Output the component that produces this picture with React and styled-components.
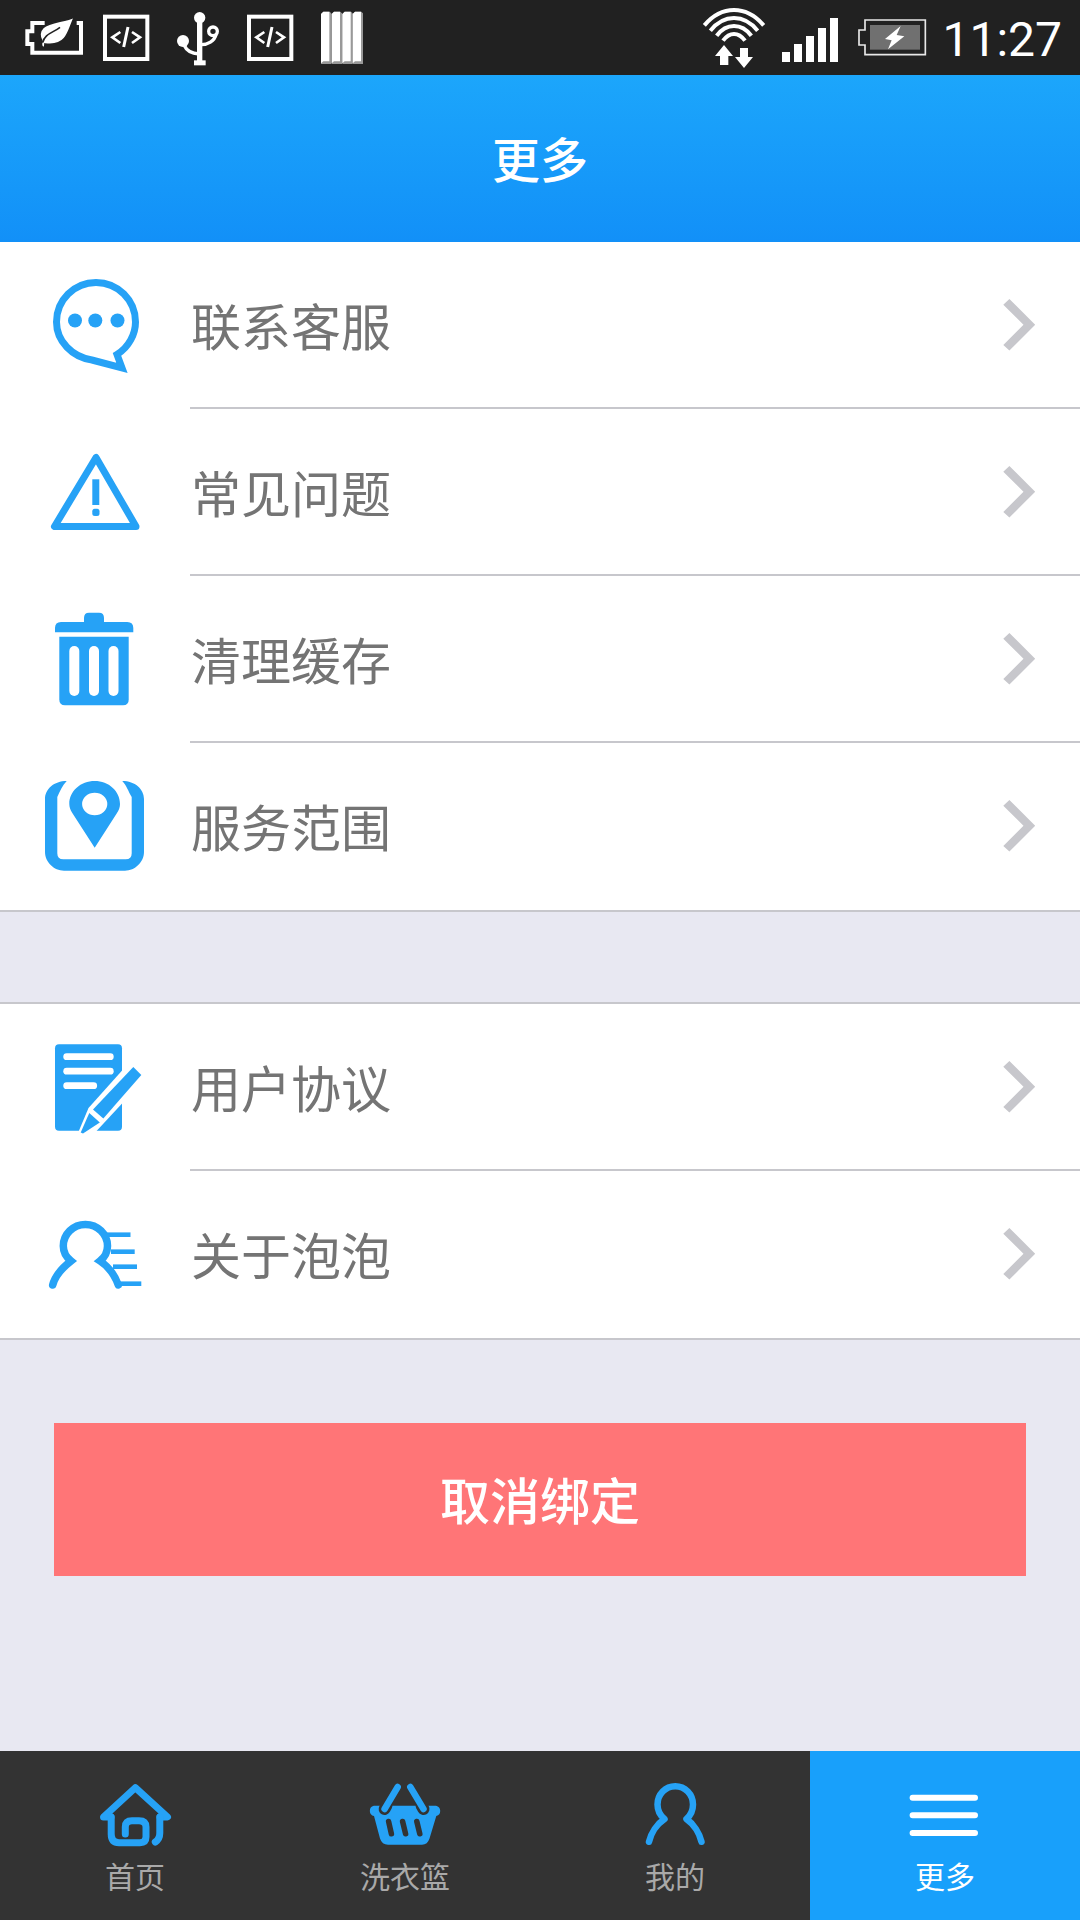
import React, { useState } from 'react';
import styled, { createGlobalStyle, ThemeProvider } from 'styled-components';

const theme = {
  blue: '#26a2f6',
  activeBlue: '#18a0fb',
  red: '#ff7577',
  white: '#ffffff',
  dark: '#333333',
  statusBar: '#212121',
  background: '#e8e8f2',
  line: '#c7c7cc',
  text: '#747474',
  tabText: '#a9a9a9',
  font: {
    family: "'Noto Sans CJK SC', sans-serif",
    size: {
      s: '30px',
      m: '48px',
      l: '50px',
    },
  },
};

const GlobalStyle = createGlobalStyle`
  *, *::before, *::after {
    box-sizing: border-box;
  }

  body {
    margin: 0;
    font-family: ${theme.font.family};
    background-color: ${theme.background};
  }

  svg {
    display: block;
    flex-shrink: 0;
    overflow: visible;
  }
`;

const Wrapper = styled.div`
  display: flex;
  flex-direction: column;
  min-height: 100vh;
`;

const StatusBar = styled.div`
  display: flex;
  justify-content: space-between;
  height: 75px;
  padding: 0 18px 0 24px;
  background-color: ${({ theme }) => theme.statusBar};
  color: ${({ theme }) => theme.white};
`;

const StatusGroup = styled.div`
  display: flex;
  align-items: center;
  gap: 18px;
`;

const Time = styled.time`
  font-family: Roboto, sans-serif;
  font-size: ${({ theme }) => theme.font.size.m};
  line-height: 72px;
  padding-top: 4px;
`;

const Header = styled.header`
  display: flex;
  justify-content: center;
  align-items: center;
  height: 167px;
  padding-bottom: 4px;
  background: linear-gradient(#1ca6fb, #1290f8);
  color: ${({ theme }) => theme.white};
`;

const Title = styled.h1`
  margin: 0;
  font-size: ${({ theme }) => theme.font.size.m};
  font-weight: 500;
  line-height: 72px;
`;

const List = styled.nav`
  display: flex;
  flex-direction: column;
  background-color: ${({ theme }) => theme.white};
  border-bottom: 2px solid ${({ theme }) => theme.line};

  & + & {
    margin-top: 90px;
    border-top: 2px solid ${({ theme }) => theme.line};
  }
`;

const RowIcon = styled.span`
  display: flex;
  justify-content: center;
  width: 190px;
  padding-top: 32px;
  color: ${({ theme }) => theme.blue};
`;

const RowBody = styled.span`
  display: flex;
  flex: 1;
  justify-content: space-between;
  align-items: center;
  padding-right: 44px;
  border-bottom: 2px solid ${({ theme }) => theme.line};
  color: ${({ theme }) => theme.line};
`;

const RowLink = styled.a`
  display: flex;
  height: 167px;
  text-decoration: none;

  &:last-child ${RowBody} {
    border-color: transparent;
  }
`;

const RowLabel = styled.span`
  padding: 0 0 2px 1px;
  color: ${({ theme }) => theme.text};
  font-size: ${({ theme }) => theme.font.size.l};
  line-height: 72px;
`;

const UnbindButton = styled.button`
  height: 153px;
  margin: 83px 54px 60px;
  padding: 0 0 4px;
  border: 0;
  background-color: ${({ theme }) => theme.red};
  color: ${({ theme }) => theme.white};
  font-family: inherit;
  font-size: ${({ theme }) => theme.font.size.l};
  font-weight: 500;
`;

const TabBar = styled.nav`
  display: grid;
  grid-template-columns: repeat(4, 1fr);
  margin-top: auto;
  background-color: ${({ theme }) => theme.dark};
`;

const Tab = styled.a`
  display: flex;
  flex-direction: column;
  align-items: center;
  gap: 4px;
  height: 169px;
  padding-top: 32px;
  background-color: ${({ theme, $active }) => ($active ? theme.activeBlue : theme.dark)};
  color: ${({ theme, $active }) => ($active ? theme.white : theme.blue)};
  text-decoration: none;
`;

const TabLabel = styled.span`
  color: ${({ theme, $active }) => ($active ? theme.white : theme.tabText)};
  font-size: ${({ theme }) => theme.font.size.s};
  line-height: 44px;
`;

const RowSvg = ({ children }) => (
  <svg width="100" height="101" viewBox="0 0 100 101" fill="currentColor" aria-hidden="true">
    {children}
  </svg>
);

const TabSvg = ({ children }) => (
  <svg width="72" height="66" viewBox="0 0 72 66" fill="none" stroke="currentColor" strokeWidth="7" strokeLinecap="round" strokeLinejoin="round" aria-hidden="true">
    {children}
  </svg>
);

const ChatIcon = () => (
  <RowSvg>
    <path
      d="M77 94 L72 80.5 C84 73 90.5 60 90.5 48 A39.5 39.5 0 1 0 11.5 48 C11.5 67 27 83 47 86 Z"
      fill="none"
      stroke="currentColor"
      strokeWidth="7"
    />
    <circle cx="30" cy="46.5" r="7" />
    <circle cx="50.3" cy="46.5" r="7" />
    <circle cx="72.5" cy="46.5" r="7" />
  </RowSvg>
);

const WarningIcon = () => (
  <RowSvg>
    <path d="M51 16.5 L9.5 85.5 H91 Z" fill="none" stroke="currentColor" strokeWidth="7" strokeLinejoin="round" />
    <path d="M47.3 38.3 H54.3 V64 H47.3 Z" />
    <rect x="47.3" y="67.7" width="7.2" height="7.2" rx="2.5" />
  </RowSvg>
);

const TrashIcon = () => (
  <RowSvg>
    <path d="M10 24.3 V20 Q10 14 16 14 H39 V10 Q39 4.7 44 4.7 H54 Q59 4.7 59 10 V14 H82.3 Q88.3 14 88.3 20 V24.3 Z" />
    <path d="M14.3 28.7 H83.7 V91.5 Q83.7 97.3 78 97.3 H20 Q14.3 97.3 14.3 91.5 Z" />
    <g stroke="#fff" strokeWidth="10" strokeLinecap="round">
      <path d="M29.3 43 V83" />
      <path d="M49 43 V83" />
      <path d="M68.5 43 V83" />
    </g>
  </RowSvg>
);

const PlaceIcon = () => (
  <RowSvg>
    <path d="M21.7 6 C9 6 0 14 0 24 V77 C0 87 9 95.7 19 95.7 H80 C90 95.7 99 87 99 77 V24 C99 14 90 6 77.3 6 C82 11 83 16 86.7 22 V78.3 Q86.7 84.3 80.7 84.3 H18.3 Q12.3 84.3 12.3 78.3 V22 C15 16 17 11 21.7 6 Z" />
    <path
      d="M49.7 72.7 L27.3 38 C25.3 35 24.3 32 24.3 29 C24.3 16 35.7 6 49.7 6 S75 16 75 29 C75 32 74 35 72 38 Z M49.7 17.7 A12.6 11.3 0 1 0 49.7 40.3 A12.6 11.3 0 1 0 49.7 17.7 Z"
      fillRule="evenodd"
    />
  </RowSvg>
);

const AgreementIcon = () => (
  <RowSvg>
    <rect x="10" y="8.3" width="67" height="86.4" rx="4" />
    <g stroke="#fff" strokeWidth="6.8" strokeLinecap="round">
      <path d="M21.7 20.7 H65.3" />
      <path d="M21.7 35.2 H65.3" />
      <path d="M21.7 49.7 H48.7" />
    </g>
    <path d="M78 33.5 L43.5 72 L33 97 L36 100 H45 L52 94.5 L78 66.5 Z" fill="#fff" />
    <path d="M88.3 31 L96.3 39 L58.3 82.5 L48 73.5 Z" />
    <path d="M44.3 77 L54.8 86.5 L38 97.5 L35.7 96.5 Z" />
  </RowSvg>
);

const AboutIcon = () => (
  <RowSvg>
    <g fill="none" stroke="currentColor">
      <path
        d="M7.7 82 C10 73 17 65 26 58 C21 54 18.3 48 18.3 43 A22 21.5 0 0 1 62.5 43 C62.5 49 60 54 55 58 C64 64 70.5 74 73.3 82"
        strokeWidth="7.5"
        strokeLinecap="round"
      />
      <g strokeWidth="4.6">
        <path d="M60 31.7 H85.5" />
        <path d="M66 48.7 H89.7" />
        <path d="M68 63.7 H92" />
        <path d="M73 80.7 H96.3" />
      </g>
    </g>
  </RowSvg>
);

const Chevron = () => (
  <svg width="34" height="51" viewBox="0 0 34 51" fill="currentColor" aria-hidden="true">
    <path d="M7.4 0 L33.2 25.8 L7.4 51.5 L1.3 46 L21.5 25.8 L1.3 5.7 Z" />
  </svg>
);

const HomeIcon = () => (
  <TabSvg>
    <path d="M12 34 H4.5 L36.3 4.7 L68.5 34 H61" />
    <path d="M12.2 34 V51 Q12.2 59.7 20 59.7 H41 Q47 59.7 47 54 V44 Q47 37.7 40 37.7 H33 Q26.3 37.7 26.3 44 V51" />
    <path d="M60.8 34 V50 Q60.8 56 56.3 59" />
  </TabSvg>
);

const BasketIcon = () => (
  <TabSvg>
    <path
      d="M4.8 22.7 H67 A5.3 5.3 0 0 1 67.3 33 L60.5 55.5 Q58.5 61.7 53 61.7 H19 Q13 61.7 11 55.5 L5 33 A5.3 5.3 0 0 1 4.8 22.7 Z"
      fill="currentColor"
      stroke="none"
    />
    <g stroke="#333" strokeWidth="12">
      <path d="M17.5 22.5 L15.6 26" />
      <path d="M52.5 22.5 L54.5 26" />
    </g>
    <path d="M28.7 4 L15.6 26 M41.3 4 L54.5 26" strokeWidth="6.5" />
    <path d="M19.6 38.5 L22.4 50.8 M33.6 38.5 L36.6 50.8 M47.8 38.5 L50.8 50.8" stroke="#333" strokeWidth="5.5" />
  </TabSvg>
);

const UserIcon = () => (
  <TabSvg>
    <path
      d="M10 58.8 C12 50 18 41 25.5 36 C20.5 32 18.5 27 18.5 21.5 A17.7 18.3 0 0 1 54 21.5 C54 27 52 32 47.5 36 C54.5 41 60.5 50 62.5 58.8"
      strokeWidth="6.5"
    />
  </TabSvg>
);

const MenuIcon = () => (
  <TabSvg>
    <path d="M3.6 14.7 H66 M3.6 32.3 H66 M3.6 50 H66" strokeWidth="6" />
  </TabSvg>
);

// status bar drawings use three units per pixel
const StatusSvg = ({ x, width, children }) => (
  <svg width={width} height="75" viewBox={`${x} 0 ${width * 3} 225`} fill="currentColor" aria-hidden="true">
    {children}
  </svg>
);

const PowerSaverIcon = () => (
  <StatusSvg x={72} width={60}>
    <path d="M134 69 H97 V94 H82 V132 H97 V158 H243 V69 H230" fill="none" stroke="currentColor" strokeWidth="12" />
    <path
      d="M224 51 C190 66 150 64 129 83 C117 95 119 112 126 124 C123 132 125 140 130 143 C133 143 135 140 135 132 C158 135 181 130 193 116 C208 99 212 73 224 51 Z"
      stroke="#212121"
      strokeWidth="5"
    />
    <path d="M128 128 C134 101 158 99 180 82" fill="none" stroke="#212121" strokeWidth="5" />
  </StatusSvg>
);

const CodeIcon = () => (
  <StatusSvg x={306} width={48}>
    <rect x="315" y="50" width="127" height="127" fill="none" stroke="currentColor" strokeWidth="12" />
    <path d="M361 96 L337 112 L361 129 M396 96 L420 112 L396 129" fill="none" stroke="currentColor" strokeWidth="8" />
    <path d="M384 81 L371 141" stroke="currentColor" strokeWidth="9" />
  </StatusSvg>
);

const UsbIcon = () => (
  <StatusSvg x={504} width={60}>
    <circle cx="599" cy="53" r="17" />
    <circle cx="549" cy="123" r="18" />
    <circle cx="639" cy="94" r="13" fill="none" stroke="currentColor" strokeWidth="10" />
    <path d="M599 53 V185" stroke="currentColor" strokeWidth="16" />
    <path d="M582 181 H617 V196 H582 Z" />
    <path d="M552 135 C560 153 578 161 597 162 M648 104 C644 123 622 134 604 134" fill="none" stroke="currentColor" strokeWidth="10" />
  </StatusSvg>
);

const StripesIcon = () => (
  <StatusSvg x={936} width={60}>
    {[963, 995, 1027, 1058].map((x) => (
      <g key={x}>
        <path d={`M${x} 192 V42 L${x + 7} 35 H${x + 26} L${x + 31} 40 V192 Z`} fill="#999" />
        <path d={`M${x} 190 V42 L${x + 7} 35 H${x + 25} V184 H${x + 7} Z`} />
      </g>
    ))}
  </StatusSvg>
);

const WifiIcon = () => (
  <StatusSvg x={66} width={62}>
    <g fill="none" stroke="currentColor" strokeWidth="12">
      <path d="M73 76 Q112 30 162 30 T251 76" />
      <path d="M91 92 Q122 54 162 54 T233 92" />
      <path d="M110 107 Q132 78 162 78 T214 107" />
      <path d="M129 122 Q144 102 162 102 T195 122" />
    </g>
    <path d="M132 135 L159 168 H145 V195 H120 V168 H105 Z" />
    <path d="M192 204 L165 171 H180 V144 H204 V171 H219 Z" />
  </StatusSvg>
);

const SignalIcon = () => (
  <StatusSvg x={306} width={58}>
    <path d="M306 156 H330 V186 H306 Z M342 132 H366 V186 H342 Z M378 108 H402 V186 H378 Z M414 84 H438 V186 H414 Z M450 54 H474 V186 H450 Z" />
  </StatusSvg>
);

const ChargingIcon = () => (
  <StatusSvg x={534} width={66}>
    <path d="M555 60 H736 V164 H555 V135 H537 V90 H555 Z" fill="none" stroke="#e8e8e8" strokeWidth="5" />
    <rect x="570" y="75" width="150" height="74" fill="#707070" />
    <path d="M662 78 L615 117 L635 121 L624 148 L673 109 L650 105 Z" />
  </StatusSvg>
);

const sections = [
  [
    { id: 'contact', label: '联系客服', Icon: ChatIcon },
    { id: 'faq', label: '常见问题', Icon: WarningIcon },
    { id: 'cache', label: '清理缓存', Icon: TrashIcon },
    { id: 'area', label: '服务范围', Icon: PlaceIcon },
  ],
  [
    { id: 'agreement', label: '用户协议', Icon: AgreementIcon },
    { id: 'about', label: '关于泡泡', Icon: AboutIcon },
  ],
];

const tabs = [
  { id: 'home', label: '首页', Icon: HomeIcon },
  { id: 'basket', label: '洗衣篮', Icon: BasketIcon },
  { id: 'mine', label: '我的', Icon: UserIcon },
  { id: 'more', label: '更多', Icon: MenuIcon },
];

const App = () => {
  const [activeTab, setActiveTab] = useState('more');

  return (
    <ThemeProvider theme={theme}>
      <GlobalStyle />
      <Wrapper>
        <StatusBar>
          <StatusGroup>
            <PowerSaverIcon />
            <CodeIcon />
            <UsbIcon />
            <CodeIcon />
            <StripesIcon />
          </StatusGroup>
          <StatusGroup>
            <WifiIcon />
            <SignalIcon />
            <ChargingIcon />
            <Time>11:27</Time>
          </StatusGroup>
        </StatusBar>
        <Header>
          <Title>更多</Title>
        </Header>
        {sections.map((rows) => (
          <List key={rows[0].id}>
            {rows.map(({ id, label, Icon }) => (
              <RowLink key={id} href={`#${id}`}>
                <RowIcon>
                  <Icon />
                </RowIcon>
                <RowBody>
                  <RowLabel>{label}</RowLabel>
                  <Chevron />
                </RowBody>
              </RowLink>
            ))}
          </List>
        ))}
        <UnbindButton type="button">取消绑定</UnbindButton>
        <TabBar>
          {tabs.map(({ id, label, Icon }) => (
            <Tab key={id} href={`#${id}`} $active={id === activeTab} onClick={() => setActiveTab(id)}>
              <Icon />
              <TabLabel $active={id === activeTab}>{label}</TabLabel>
            </Tab>
          ))}
        </TabBar>
      </Wrapper>
    </ThemeProvider>
  );
};

export default App;
